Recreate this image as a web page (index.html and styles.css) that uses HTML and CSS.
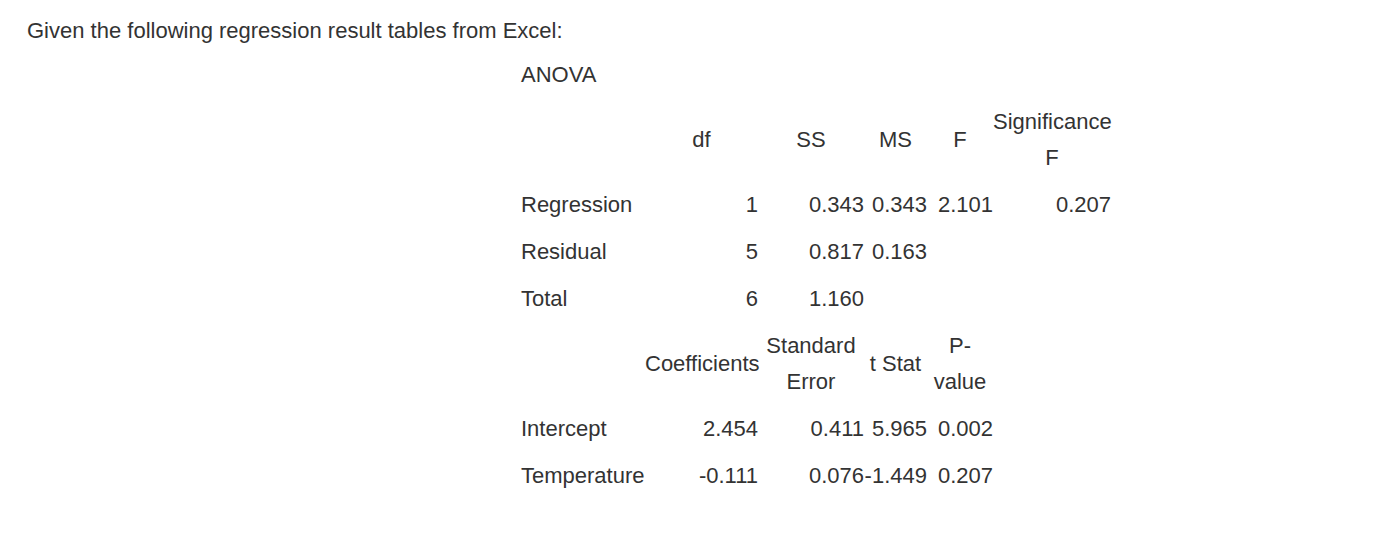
FILE: index.html
```html
<!DOCTYPE html>
<html>
<head>
<meta charset="utf-8">
<link rel="stylesheet" href="styles.css">
</head>
<body>
<div class="page">
  <p class="intro">Given the following regression result tables from Excel:</p>
  <table class="reg">
    <colgroup>
      <col class="c1"><col class="c2"><col class="c3"><col class="c4"><col class="c5"><col class="c6">
    </colgroup>
    <tr><td class="lbl">ANOVA</td><td></td><td></td><td></td><td></td><td></td></tr>
    <tr class="head"><td></td><td>df</td><td>SS</td><td>MS</td><td>F</td><td>Significance F</td></tr>
    <tr><td class="lbl">Regression</td><td class="num">1</td><td class="num">0.343</td><td class="num">0.343</td><td class="num">2.101</td><td class="num">0.207</td></tr>
    <tr><td class="lbl">Residual</td><td class="num">5</td><td class="num">0.817</td><td class="num">0.163</td><td></td><td></td></tr>
    <tr><td class="lbl">Total</td><td class="num">6</td><td class="num">1.160</td><td></td><td></td><td></td></tr>
    <tr class="head"><td></td><td>Coefficients</td><td>Standard Error</td><td>t Stat</td><td>P-<br>value</td><td></td></tr>
    <tr><td class="lbl">Intercept</td><td class="num">2.454</td><td class="num">0.411</td><td class="num">5.965</td><td class="num">0.002</td><td></td></tr>
    <tr><td class="lbl">Temperature</td><td class="num">-0.111</td><td class="num">0.076</td><td class="num">-1.449</td><td class="num">0.207</td><td></td></tr>
  </table>
</div>
</body>
</html>
```
FILE: styles.css
```css
html, body {
  margin: 0;
  padding: 0;
  background: #ffffff;
}
body {
  font-family: Helvetica, "Liberation Sans", Arial, sans-serif;
  font-size: 22px;
  line-height: 36px;
  color: #333333;
}
.page {
  padding: 13px 0 0 27px;
}
.intro {
  margin: 0;
}
.reg {
  margin: 2px 0 0 494px;
  border-collapse: collapse;
  table-layout: fixed;
  width: 590px;
}
.c1 { width: 124px; }
.c2 { width: 113px; }
.c3 { width: 106px; }
.c4 { width: 63px; }
.c5 { width: 66px; }
.c6 { width: 118px; }
.reg td {
  padding: 5.5px 0;
  vertical-align: middle;
  white-space: nowrap;
}
.reg .head td {
  text-align: center;
  white-space: normal;
}
.reg td.lbl {
  text-align: left;
}
.reg td.num {
  text-align: right;
}
```
